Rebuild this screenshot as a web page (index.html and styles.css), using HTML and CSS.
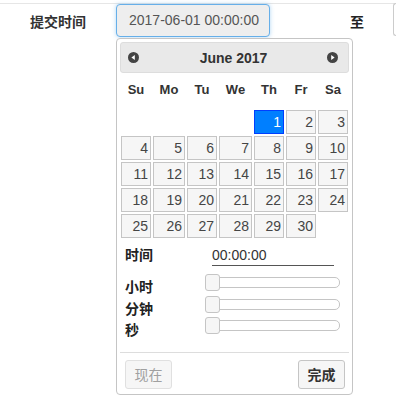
FILE: index.html
```html
<!DOCTYPE html>
<html lang="zh">
<head>
<meta charset="utf-8">
<link rel="stylesheet" href="styles.css">
</head>
<body>
<div class="form-row">
  <label class="row-label">提交时间</label>
  <div class="date-input focused">2017-06-01 00:00:00</div>
  <span class="to">至</span>
  <div class="date-input other"></div>
</div>

<div class="picker">
  <div class="pk-header">
    <span class="nav prev"><svg width="11" height="11" viewBox="0 0 11 11"><circle cx="5.5" cy="5.5" r="5.5" fill="#444"/><path d="M3.4 5.5 L6.8 3 L6.8 8 Z" fill="#fff"/></svg></span>
    <span class="pk-title">June 2017</span>
    <span class="nav next"><svg width="11" height="11" viewBox="0 0 11 11"><circle cx="5.5" cy="5.5" r="5.5" fill="#444"/><path d="M7.6 5.5 L4.2 3 L4.2 8 Z" fill="#fff"/></svg></span>
  </div>
  <div class="cal">
    <div class="dow">Su</div><div class="dow">Mo</div><div class="dow">Tu</div><div class="dow">We</div><div class="dow">Th</div><div class="dow">Fr</div><div class="dow">Sa</div>
    <div class="blank"></div><div class="blank"></div><div class="blank"></div><div class="blank"></div>
    <div class="day active">1</div><div class="day">2</div><div class="day">3</div>
    <div class="day">4</div><div class="day">5</div><div class="day">6</div><div class="day">7</div><div class="day">8</div><div class="day">9</div><div class="day">10</div>
    <div class="day">11</div><div class="day">12</div><div class="day">13</div><div class="day">14</div><div class="day">15</div><div class="day">16</div><div class="day">17</div>
    <div class="day">18</div><div class="day">19</div><div class="day">20</div><div class="day">21</div><div class="day">22</div><div class="day">23</div><div class="day">24</div>
    <div class="day">25</div><div class="day">26</div><div class="day">27</div><div class="day">28</div><div class="day">29</div><div class="day">30</div>
  </div>
  <div class="time">
    <div class="time-row">
      <span class="t-label">时间</span>
      <span class="t-value">00:00:00</span>
    </div>
    <div class="slide-row">
      <span class="s-label">小时</span>
      <div class="slider"><div class="track"></div><span class="handle"></span></div>
    </div>
    <div class="slide-row">
      <span class="s-label">分钟</span>
      <div class="slider"><div class="track"></div><span class="handle"></span></div>
    </div>
    <div class="slide-row">
      <span class="s-label">秒</span>
      <div class="slider"><div class="track"></div><span class="handle"></span></div>
    </div>
  </div>
  <div class="buttons">
    <button class="btn now" disabled>现在</button>
    <button class="btn done">完成</button>
  </div>
</div>
</body>
</html>
```

FILE: styles.css
```css
* { box-sizing: border-box; }
html, body { margin: 0; padding: 0; background: #fff; }
body {
  font-family: "Liberation Sans", "Noto Sans CJK SC", sans-serif;
  font-size: 14px;
  color: #333;
  width: 396px;
  height: 403px;
  overflow: hidden;
  position: relative;
}
.form-row {
  margin-top: 3px;
  border-top: 1px solid #e6e6e6;
  display: flex;
  align-items: center;
  padding-left: 30px;
  height: 34px;
  white-space: nowrap;
}
.row-label {
  flex: none;
  width: 86px;
  font-weight: bold;
  color: #333;
}
.date-input {
  flex: none;
  height: 33px;
  border-radius: 4px;
  background: #eee;
  color: #555;
  line-height: 31px;
  padding-left: 12px;
}
.date-input.focused {
  width: 154px;
  border: 1px solid #66afe9;
  box-shadow: 0 0 4px rgba(102, 175, 233, 0.5);
}
.to {
  flex: none;
  margin-left: 80px;
  width: 43px;
  font-weight: bold;
  color: #222;
}
.date-input.other {
  width: 3px;
  padding: 0;
  border: 1px solid #ccc;
  border-right: none;
  border-radius: 4px 0 0 4px;
  background: #fff;
  height: 33px;
  margin-top: -2px;
}
.picker {
  position: absolute;
  left: 116px;
  top: 38px;
  width: 237px;
  border: 1px solid #c5c5c5;
  border-radius: 4px;
  background: #fff;
  padding: 3px;
}
.pk-header {
  height: 31px;
  border: 1px solid #dddddd;
  background: #e9e9e9;
  border-radius: 3px;
  display: flex;
  align-items: center;
  justify-content: space-between;
  padding: 0 10px 0 7px;
}
.nav { display: flex; }
.nav svg { display: block; }
.pk-title {
  font-weight: bold;
  font-size: 14px;
  color: #333;
  margin-left: 1px;
}
.cal {
  display: grid;
  grid-template-columns: 30px 32px 30px 33px 30px 30px 30px;
  grid-template-rows: 35px repeat(5, 24px);
  column-gap: 2px;
  row-gap: 2px;
  margin-left: 1px;
}
.cal .dow { margin-bottom: -1px; }
.dow {
  font-weight: bold;
  font-size: 13px;
  color: #333;
  text-align: center;
  line-height: 34px;
}
.day {
  border: 1px solid #c5c5c5;
  background: #f6f6f6;
  color: #454545;
  text-align: right;
  padding-right: 2px;
  line-height: 22px;
  font-size: 14px;
}
.day.active {
  background: #007fff;
  border-color: #003eff;
  color: #fff;
}
.time { margin-top: 8px; }
.time-row {
  display: flex;
  height: 20px;
  align-items: flex-start;
}
.t-label {
  width: 92px;
  padding-left: 5px;
  font-weight: bold;
  line-height: 18px;
  color: #222;
}
.t-value {
  width: 122px;
  line-height: 18px;
  border-bottom: 1px solid #555;
  height: 20px;
  color: #333;
}
.slide-row {
  display: flex;
  height: 21.5px;
}
.time-row + .slide-row { margin-top: 8px; }
.s-label {
  width: 85px;
  padding-left: 5px;
  font-weight: bold;
  line-height: 18px;
  margin-top: 4px;
  color: #222;
}
.slider {
  position: relative;
  width: 135px;
  height: 17px;
}
.track {
  margin-top: 3px;
  height: 11px;
  border: 1px solid #c5c5c5;
  border-radius: 5px;
  background: #fff;
}
.handle {
  position: absolute;
  left: 0;
  top: 0;
  width: 15px;
  height: 17px;
  border: 1px solid #c5c5c5;
  background: #f6f6f6;
  border-radius: 3px;
}
.buttons {
  margin-top: 13px;
  border-top: 1px solid #dddddd;
  padding: 7px 4px 2px 5px;
  display: flex;
  justify-content: space-between;
}
.btn {
  width: 47px;
  height: 29px;
  border: 1px solid #c5c5c5;
  border-radius: 3px;
  background: #f6f6f6;
  font-family: "Liberation Sans", "Noto Sans CJK SC", sans-serif;
  font-size: 14px;
  padding: 0;
}
.btn.now {
  color: #a0a0a0;
  border-color: #e0e0e0;
  font-weight: normal;
}
.btn.done {
  color: #333;
  font-weight: bold;
}
```
